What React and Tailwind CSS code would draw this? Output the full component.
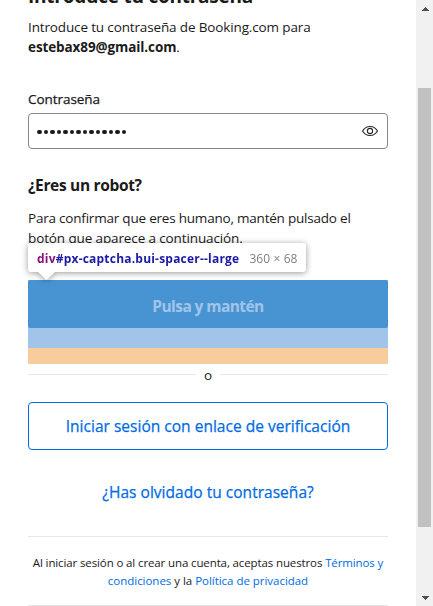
import React from 'react';

function Scrollbar() {
  return (
    <div className="flex w-[17px] shrink-0 flex-col items-center bg-[#f1f1f1]">
      <div className="flex h-[17px] w-full items-center justify-center">
        <svg width="8" height="4" viewBox="0 0 8 4" shapeRendering="crispEdges"><path d="M0 4L4 0L8 4Z" fill="#505050" /></svg>
      </div>
      <div className="mt-[71px] h-[439px] w-[13px] bg-[#c1c1c1]" />
      <div className="mt-auto flex h-[17px] w-full items-center justify-center">
        <svg width="8" height="4" viewBox="0 0 8 4" shapeRendering="crispEdges"><path d="M0 0L4 4L8 0Z" fill="#505050" /></svg>
      </div>
    </div>
  );
}

function InspectorTooltip() {
  return (
    <div className="absolute -top-[37px] left-0 flex h-[29px] w-[278px] items-center whitespace-nowrap rounded-[3px] bg-white pl-[9px] pt-[2px] text-[12px] drop-shadow-[0_1px_3px_rgba(0,0,0,0.4)]">
      <span className="font-bold tracking-[0.21px] text-[#1a1aa6]"><span className="text-[#881280]">div</span>#px-captcha.bui-spacer--large</span>
      <span className="ml-[10px] tracking-[0.1px] text-[#808080]">360 × 68</span>
      <svg className="absolute left-[10px] top-[29px]" width="17" height="8" viewBox="0 0 17 8"><path d="M0 0H17L8.5 8Z" fill="#fff" /></svg>
    </div>
  );
}

export default function App() {
  return (
    <div className="flex h-[606px] w-[433px] overflow-hidden bg-white font-['Open_Sans','Noto_Sans',sans-serif] text-[#1a1a1a]">
      <main className="flex min-w-0 flex-1 flex-col px-7">
        <h1 className="-mt-[18px] h-[28px] whitespace-nowrap text-[19px] font-bold leading-[28px] tracking-[-0.24px]">Introduce tu contraseña</h1>
        <p className="mt-[7px] whitespace-nowrap text-[13.5px] leading-[20px] tracking-[-0.14px]">
          <span className="block">Introduce tu contraseña de Booking.com para</span>
          <span className="block tracking-[-0.1px]"><b className="font-bold">estebax89@gmail.com</b>.</span>
        </p>
        <label className="mt-[32px] h-[20px] text-[13.5px] leading-[20px] tracking-[-0.05px] [-webkit-text-stroke:0.25px]">Contraseña</label>
        <div className="mt-[4px] flex h-[36px] shrink-0 items-center justify-between rounded-[4px] border border-[#868686] pl-2 pr-[9px]">
          <div className="flex gap-[2px] pt-[2px]">
            {Array.from({ length: 14 }, (_, i) => (
              <span key={i} className="size-[4.5px] rounded-full bg-[#1a1a1a]" />
            ))}
          </div>
          <svg width="16" height="12" viewBox="0 0 16 12" fill="none" stroke="#262626" strokeWidth="1.1">
            <path d="M0.5 6C2.2 3.1 4.6 1.5 8 1.5S13.8 3.1 15.5 6C13.8 8.9 11.4 10.5 8 10.5S2.2 8.9 0.5 6Z" />
            <circle cx="8" cy="6" r="2.6" />
          </svg>
        </div>
        <h2 className="mt-[24px] h-[24px] whitespace-nowrap text-[15.5px] font-bold leading-[24px] tracking-[-0.33px]">¿Eres un robot?</h2>
        <p className="mt-[11px] whitespace-nowrap text-[13.5px] leading-[20px] tracking-[-0.21px]">
          <span className="block">Para confirmar que eres humano, mantén pulsado el</span>
          <span className="block tracking-[-0.12px]">botón que aparece a continuación.</span>
        </p>
        <section className="relative mt-[32px] shrink-0">
          <div className="h-[68px] bg-[#a1c4e9]">
            <div className="flex h-[48px] items-center justify-center rounded-[2px] bg-[#4894d3] pt-[5px] text-[15.5px] font-bold tracking-[-0.58px] text-[#a1c4e9]">
              <span className="whitespace-nowrap">Pulsa y mantén</span>
            </div>
          </div>
          <div className="h-[16px] bg-[#f8cc9d]" />
          <InspectorTooltip />
        </section>
        <div className="flex h-[22px] shrink-0 items-center text-[13.5px] leading-[20px]">
          <i className="mb-px h-px flex-1 bg-[#e6e6e6]" /><span className="w-6 text-center">o</span><i className="mb-px h-px flex-1 bg-[#e6e6e6]" />
        </div>
        <button className="mt-[16px] h-[48px] shrink-0 whitespace-nowrap rounded-[4px] border border-[#006ce4] pt-px text-[15.5px] tracking-[0.02px] text-[#006ce4] [-webkit-text-stroke:0.25px]">Iniciar sesión con enlace de verificación</button>
        <a className="mt-[30px] h-[24px] whitespace-nowrap text-center text-[15.5px] leading-[24px] tracking-[0.03px] text-[#006ce4] [-webkit-text-stroke:0.25px]">¿Has olvidado tu contraseña?</a>
        <footer className="mt-[32px] h-[70px] shrink-0 whitespace-nowrap border-y border-[#e6e6e6] pt-[17px] text-center text-[11.5px] leading-[18px]">
          <span className="block tracking-[-0.12px]">Al iniciar sesión o al crear una cuenta, aceptas nuestros <a className="text-[#006ce4]">Términos y</a></span>
          <span className="block tracking-[-0.03px]"><a className="text-[#006ce4]">condiciones</a> y la <a className="text-[#006ce4]">Política de privacidad</a></span>
        </footer>
      </main>
      <Scrollbar />
    </div>
  );
}
